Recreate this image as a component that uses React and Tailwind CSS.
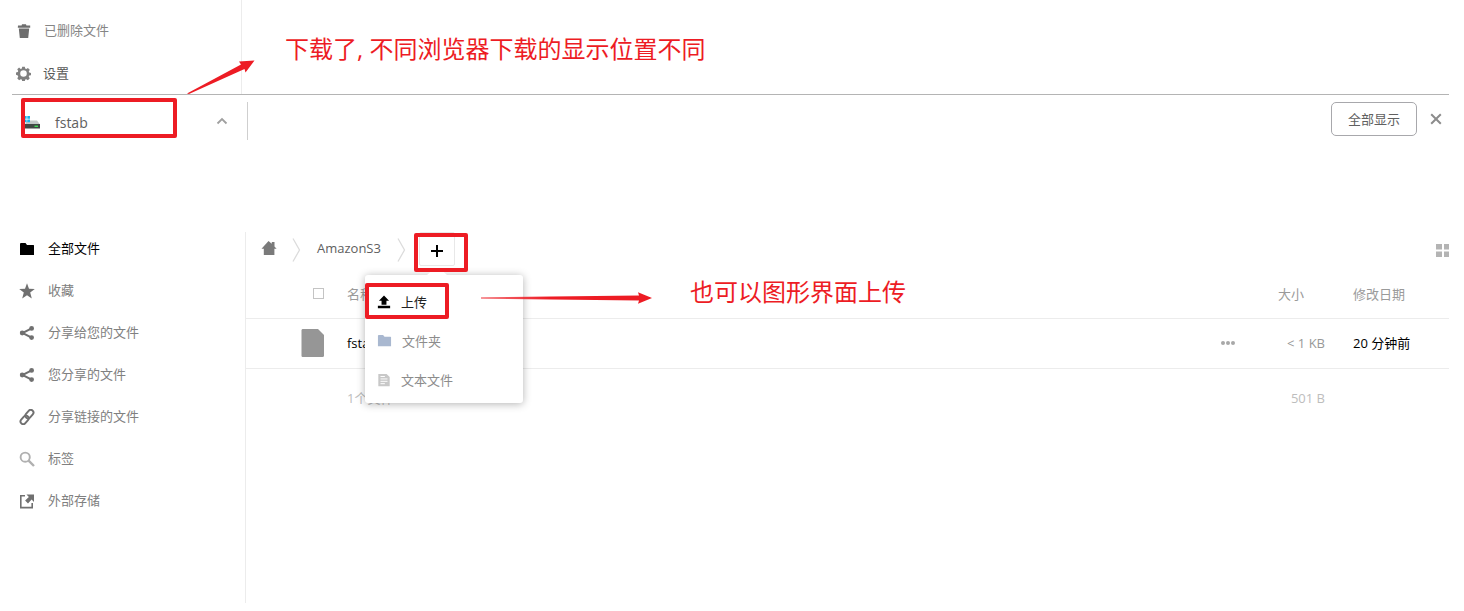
import React from "react";

const iconPaths = {
  trash: <path d="M2 2.500h3.600L6 1.300h4l.4 1.200H14.200v2.200H1.800zM2.800 5.500h10.400L12.200 15H3.800z" />,
  gear: (
    <path
      fillRule="evenodd"
      d="M6.600 0.800h2.800l.4 1.900 1.200.5 1.700-1.100 2 2-1.100 1.700.5 1.200 1.900.4v2.400l-1.900.4-.5 1.200 1.100 1.700-2 2-1.700-1.100-1.200.5-.4 1.900H6.600l-.4-1.900-1.200-.5-1.700 1.100-2-2 1.100-1.700-.5-1.200L0 9.200V6.800l1.900-.4.5-1.200-1.100-1.700 2-2L5 3.200l1.200-.5zM8 4.500a3.500 3.500 0 1 0 0 7 3.500 3.500 0 0 0 0-7z"
    />
  ),
  folder: <path d="M1 3q0-1 1-1h4.500l1.500 2h6.500q.5 0 .5.500V14H1z" />,
  star: <path d="M8 .3l2 5.500 5.800.1-4.600 3.600L12.800 15.500 8 12.200 3.200 15.500l1.600-6L.2 5.900 6 5.800z" />,
  share: (
    <>
      <path d="M12.600 3.400L3.500 8l9.100 4.600" fill="none" stroke="currentColor" strokeWidth="2" />
      <circle cx="12.600" cy="3.400" r="2.400" />
      <circle cx="3.200" cy="8" r="2.400" />
      <circle cx="12.600" cy="12.600" r="2.400" />
    </>
  ),
  link: (
    <g fill="none" stroke="currentColor" strokeWidth="1.900" transform="rotate(-50 8 8)">
      <rect x="-.5" y="5.300" width="9.500" height="5.400" rx="2.700" />
      <rect x="7" y="5.300" width="9.500" height="5.400" rx="2.700" />
    </g>
  ),
  search: (
    <g fill="none" stroke="currentColor" strokeWidth="1.900">
      <circle cx="6.200" cy="6.200" r="4.600" />
      <path d="M9.600 9.600L15 15" strokeWidth="2.400" />
    </g>
  ),
  external: (
    <>
      <path d="M6 2.800H1.800v11.800h11.400V10" fill="none" stroke="currentColor" strokeWidth="1.600" />
      <path d="M7.500 1.500H15V9l-2.400-2.400-3.600 3.800-2.900-2.900L9.900 3.900z" />
    </>
  ),
  home: <path d="M7.500 1L.5 8.800h2.300V15h10.600V8.800h2.200L13.500 6.400V2h-2.700v1.700z" />,
  upload: <path d="M8 .5l5.800 6h-3V11H5.200V6.500h-3zM1 12.300h14V15H1z" />,
  textFile: (
    <>
      <path d="M1.500 1h9.500l3.500 3.500V15h-13z" />
      <path d="M4 4h5M4 6.800h8M4 9.500h8M4 12.200h5" stroke="#fff" strokeWidth="1.100" />
    </>
  ),
};

function Icon({ name, className = "size-4" }) {
  return (
    <svg viewBox="0 0 16 16" aria-hidden="true" className={`shrink-0 ${className}`} fill="currentColor">
      {iconPaths[name]}
    </svg>
  );
}

function Highlight({ className }) {
  return <span aria-hidden="true" className={`pointer-events-none absolute border-4 border-[#ed1c24] ${className}`} />;
}

const navItems = [
  { icon: "folder", label: "全部文件", tone: "text-black", iconTone: "size-4 text-black" },
  { icon: "star", label: "收藏", tone: "text-[#808080]", iconTone: "size-4 text-[#707070]" },
  { icon: "share", label: "分享给您的文件", tone: "text-[#808080]", iconTone: "size-4 text-[#707070]" },
  { icon: "share", label: "您分享的文件", tone: "text-[#808080]", iconTone: "size-4 text-[#707070]" },
  { icon: "link", label: "分享链接的文件", tone: "text-[#808080]", iconTone: "size-4 text-[#707070]" },
  { icon: "search", label: "标签", tone: "text-[#808080]", iconTone: "size-4 text-[#b0b0b0]" },
  { icon: "external", label: "外部存储", tone: "text-[#808080]", iconTone: "size-4 text-[#707070]" },
];

function TopPane() {
  return (
    <section className="relative flex border-b border-[#b4b4b4]">
      <nav className="w-[230px] shrink-0 border-r border-[#ececec] pt-[10px]">
        <a href="#trash" className="flex h-[42px] items-center gap-3 pl-1 text-[#858585]">
          <Icon name="trash" className="size-4 text-[#6e6e6e]" />
          <span className="pb-0.5">已删除文件</span>
        </a>
        <a href="#settings" className="flex h-[42px] items-center gap-3 pl-1 text-[#5a5a5a]">
          <Icon name="gear" className="size-[15px] text-[#808080]" />
          <span>设置</span>
        </a>
      </nav>
      <p className="pl-[43px] pt-[31px] text-2xl leading-9 text-[#ed1c24]">下载了, 不同浏览器下载的显示位置不同</p>
      <svg
        aria-hidden="true"
        viewBox="0 0 68 34"
        className="pointer-events-none absolute bottom-0 left-[175px] h-[34px] w-[68px]"
        fill="#ed1c24"
      >
        <path d="M0 33.500L54 4.500 52 1.500 67.500.5 58.500 12.500 57.500 9 2 34z" />
      </svg>
    </section>
  );
}

function DownloadBar() {
  return (
    <section className="flex items-start justify-between pt-[7px]">
      <div className="relative flex h-[38px] w-[236px] items-center justify-between border-r border-[#cfcfcf] pl-[11px] pr-[18px]">
        <a href="#fstab" className="flex items-center gap-[14px] pt-1 text-sm text-[#606060]">
          <svg viewBox="0 0 18 14" aria-hidden="true" className="h-[14px] w-[18px]">
            <path d="M4 4.500h10l3 4H2z" fill="#c4c8c8" />
            <path d="M2 8h15v4.500H2z" fill="#414744" />
            <path d="M11.500 9.600h3.500v1.400h-3.500z" fill="#3fdc55" />
            <path d="M1 0h2.600v2.800H1zM4.300 0H7v2.800H4.300zM1 3.500h2.600v2.800H1zM4.300 3.500H7v2.800H4.300z" fill="#19b4ea" />
          </svg>
          fstab
        </a>
        <button type="button" aria-label="更多" className="text-[#a0a0a0]">
          <svg viewBox="0 0 14 10" aria-hidden="true" className="h-[10px] w-[14px]" fill="none" stroke="currentColor" strokeWidth="1.800">
            <path d="M2.500 7.500L7 3l4.500 4.500" />
          </svg>
        </button>
        <Highlight className="-top-1 left-[9px] h-10 w-[156px] rounded-xs" />
      </div>
      <div className="flex items-center gap-[13px] pr-[7px]">
        <button type="button" className="h-[34px] rounded-[5px] border border-[#a8a8ac] px-4 text-[#606060]">
          全部显示
        </button>
        <button type="button" aria-label="关闭" className="text-[#8c8c8c]">
          <svg viewBox="0 0 12 12" aria-hidden="true" className="size-3" fill="none" stroke="currentColor" strokeWidth="2">
            <path d="M1.200 1.200l9.600 9.600M10.800 1.200l-9.600 9.600" />
          </svg>
        </button>
      </div>
    </section>
  );
}

function Separator() {
  return (
    <svg viewBox="0 0 9 24" aria-hidden="true" className="h-6 w-[9px] shrink-0" fill="none" stroke="#dcdcdc" strokeWidth="1.300">
      <path d="M1 .5L7.500 12 1 23.500" />
    </svg>
  );
}

function NewMenu() {
  return (
    <div className="absolute -left-[54px] top-[43px] z-10 w-[158px] rounded-[3px] bg-white pb-1 pt-[7px] shadow-[0_1px_8px_rgba(0,0,0,0.3)]">
      <span aria-hidden="true" className="absolute -top-[9px] left-[62px] border-x-[10px] border-b-[9px] border-x-transparent border-b-white" />
      <button type="button" className="flex h-[39px] w-full items-center gap-[10px] pl-3 text-[#222]">
        <Icon name="upload" className="size-[14px] text-black" />
        上传
      </button>
      <button type="button" className="flex h-[39px] w-full items-center gap-[10px] pl-3 text-[#8c8c8c]">
        <Icon name="folder" className="size-[15px] text-[#a9b8d0]" />
        文件夹
      </button>
      <button type="button" className="flex h-[39px] w-full items-center gap-[10px] pl-3 text-[#8c8c8c]">
        <Icon name="textFile" className="size-[14px] text-[#c8c8c8]" />
        文本文件
      </button>
      <Highlight className="left-0 top-2 h-9 w-[84px] rounded-xs" />
    </div>
  );
}

function Breadcrumbs() {
  return (
    <header className="flex h-[38px] items-start justify-between">
      <div className="flex items-start pl-[15px]">
        <a href="#home" aria-label="主页" className="flex h-8 items-center text-[#7a7a7a]">
          <Icon name="home" />
        </a>
        <span className="flex h-8 items-center pl-[15px] pt-1">
          <Separator />
        </span>
        <a href="#amazons3" className="flex h-8 items-center px-4 font-medium text-[#606060]">
          AmazonS3
        </a>
        <span className="flex h-8 items-center pr-[13px] pt-1">
          <Separator />
        </span>
        <div className="relative">
          <button type="button" aria-label="新建" className="flex h-[34px] w-9 items-center justify-center rounded-xs border border-[#e8e8e8] pt-1">
            <svg viewBox="0 0 12 12" aria-hidden="true" className="size-3" fill="none" stroke="#000" strokeWidth="2">
              <path d="M6 0v12M0 6h12" />
            </svg>
          </button>
          <NewMenu />
          <Highlight className="-left-[5px] top-px z-20 h-[39px] w-[54px] rounded-xs" />
        </div>
      </div>
      <button type="button" aria-label="网格视图" className="mt-3 text-[#b4b4b4]">
        <svg viewBox="0 0 13 13" aria-hidden="true" className="size-[13px]" fill="currentColor">
          <path d="M0 0h6v5.500H0zM8 0h5v5.500H8zM0 7.500h6V13H0zM8 7.500h5V13H8z" />
        </svg>
      </button>
    </header>
  );
}

function FileTable() {
  return (
    <table className="w-full table-fixed border-collapse text-left">
      <colgroup>
        <col className="w-[101px]" />
        <col />
        <col className="w-[30px]" />
        <col className="w-[110px]" />
        <col className="w-[96px]" />
      </colgroup>
      <thead>
        <tr className="h-12 border-b border-[#ececec] text-[#9a9a9a]">
          <th className="pl-[67px]">
            <input type="checkbox" aria-label="全选" className="block size-[11px] appearance-none border border-[#c4c4c4] bg-white" />
          </th>
          <th className="font-normal">名称</th>
          <th />
          <th className="pr-[49px] text-right font-normal">大小</th>
          <th className="font-normal">修改日期</th>
        </tr>
      </thead>
      <tbody>
        <tr className="h-[50px] border-b border-[#ececec]">
          <td className="pl-[55px]">
            <svg viewBox="0 0 24 28" aria-hidden="true" className="h-7 w-6" fill="#969696">
              <path d="M1.500 0H17l6 6v20.500q0 1.500-1.500 1.500h-20Q.5 28 .5 26.500V1.500Q.5 0 1.500 0z" />
            </svg>
          </td>
          <td className="text-black">fstab</td>
          <td>
            <button type="button" aria-label="操作" className="mx-auto block text-[#a8a8a8]">
              <svg viewBox="0 0 14 4" aria-hidden="true" className="h-1 w-[14px]" fill="currentColor">
                <circle cx="2" cy="2" r="2" />
                <circle cx="7" cy="2" r="2" />
                <circle cx="12" cy="2" r="2" />
              </svg>
            </button>
          </td>
          <td className="pr-7 text-right text-[#989898]">&lt; 1 KB</td>
          <td className="whitespace-nowrap text-black">20 分钟前</td>
        </tr>
      </tbody>
      <tfoot>
        <tr className="h-[60px] text-[#bdbdbd]">
          <td />
          <td>1个文件</td>
          <td />
          <td className="pr-7 text-right">501 B</td>
          <td />
        </tr>
      </tfoot>
    </table>
  );
}

function UploadNote() {
  return (
    <div className="pointer-events-none absolute left-[235px] top-[42px] z-20 flex items-center gap-[38px]">
      <svg viewBox="0 0 171 12" aria-hidden="true" className="mt-3 h-3 w-[171px]">
        <defs>
          <linearGradient id="shaft" x1="0" x2="1">
            <stop offset="0" stopColor="#ed1c24" stopOpacity="0.600" />
            <stop offset="0.400" stopColor="#ed1c24" />
          </linearGradient>
        </defs>
        <path d="M0 5.200L158 3.600 157 .3 171 6l-14 5.700 1-3.300L0 6.800z" fill="url(#shaft)" />
      </svg>
      <p className="text-2xl leading-9 text-[#ed1c24]">也可以图形界面上传</p>
    </div>
  );
}

export default function App() {
  return (
    <div className="min-h-screen bg-white pl-3 pr-[15px] font-['Open_Sans','Noto_Sans_CJK_SC',sans-serif] text-[13px] leading-5">
      <TopPane />
      <DownloadBar />
      <section className="mt-[92px] flex pb-2">
        <nav className="flex w-[234px] shrink-0 flex-col gap-4 border-r border-[#ececec] pb-[89px] pl-[7px] pt-1">
          {navItems.map((item) => (
            <a key={item.label} href="#files" className={`flex h-[26px] items-center gap-[13px] ${item.tone}`}>
              <Icon name={item.icon} className={item.iconTone} />
              <span className="pb-0.5">{item.label}</span>
            </a>
          ))}
        </nav>
        <main className="relative min-w-0 flex-1">
          <Breadcrumbs />
          <FileTable />
          <UploadNote />
        </main>
      </section>
    </div>
  );
}
